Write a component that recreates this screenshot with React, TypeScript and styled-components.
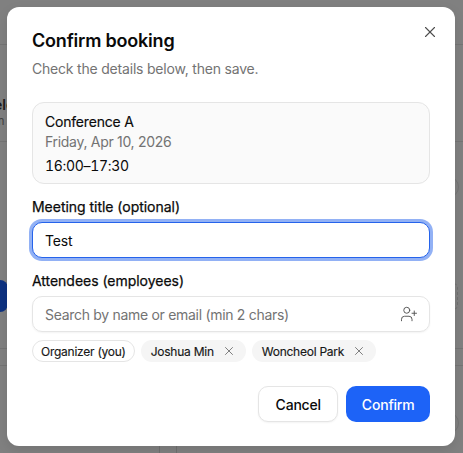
import React from "react";
import styled, { createGlobalStyle } from "styled-components";
import { X, UserPlus } from "lucide-react";

const Global = createGlobalStyle`
  html, body { margin: 0; padding: 0; height: 100%; }
  body { font-family: Inter, "Liberation Sans", sans-serif; background: #808080; overflow: hidden; }
  #root { height: 100%; }
`;

const Overlay = styled.div`
  position: relative;
  box-sizing: border-box;
  width: 463px;
  height: 453px;
  padding-right: 1px;
  background: #808080;
  overflow: hidden;
  display: flex;
  align-items: center;
  justify-content: center;
`;

const BackdropLine = styled.div<{ $top: number }>`
  position: absolute;
  left: 0;
  right: 0;
  top: ${(p) => p.$top}px;
  height: 1px;
  background: #747474;
`;

const BackdropColumnLine = styled.div<{ $left: number }>`
  position: absolute;
  left: ${(p) => p.$left}px;
  top: 365px;
  bottom: 0;
  width: 1px;
  background: #707070;
`;

const BackdropRing = styled.div<{ $top: number }>`
  position: absolute;
  right: 4px;
  top: ${(p) => p.$top}px;
  width: 22px;
  height: 22px;
  box-sizing: border-box;
  border-radius: 50%;
  border: 1px solid #747474;
`;

const BackdropSlot = styled.div`
  position: absolute;
  right: 5px;
  top: 283px;
  width: 24px;
  height: 27px;
  box-sizing: border-box;
  border-radius: 5px;
  border: 1px dashed #707070;
`;

const BackdropBlob = styled.div`
  position: absolute;
  left: -20px;
  top: 280px;
  width: 28px;
  height: 32px;
  border-radius: 8px;
  background: #0d3180;
`;

const BackdropText = styled.div<{ $top: number; $strong?: boolean }>`
  position: absolute;
  left: -6px;
  top: ${(p) => p.$top}px;
  font-size: ${(p) => (p.$strong ? 14 : 12)}px;
  font-weight: ${(p) => (p.$strong ? 600 : 400)};
  color: ${(p) => (p.$strong ? "#1a1a1a" : "#444")};
  line-height: 16px;
`;

const Dialog = styled.div`
  position: relative;
  z-index: 1;
  box-sizing: border-box;
  width: 448px;
  height: 439px;
  padding: 22px 25px 24px;
  background: #fff;
  border-radius: 12px;
  box-shadow: 0 4px 12px rgba(0, 0, 0, 0.1);
  display: flex;
  flex-direction: column;
`;

const CloseButton = styled.button`
  position: absolute;
  top: 16px;
  right: 16px;
  width: 18px;
  height: 18px;
  padding: 0;
  border: 0;
  background: none;
  color: #4d4d4d;
  display: flex;
  align-items: center;
  justify-content: center;
`;

const Title = styled.h2`
  margin: 0;
  font-size: 18px;
  line-height: 24px;
  font-weight: 600;
  letter-spacing: -0.2px;
  color: #0a0a0a;
`;

const Description = styled.p`
  margin: 6px 0 0;
  font-size: 14px;
  line-height: 20px;
  letter-spacing: -0.2px;
  color: #737373;
`;

const SummaryCard = styled.div`
  box-sizing: border-box;
  margin-top: 23px;
  height: 82px;
  padding: 9px 12px 8px;
  border: 1px solid #e5e5e5;
  border-radius: 12px;
  background: #fafafa;
`;

const CardName = styled.div`
  font-size: 14px;
  line-height: 20px;
  letter-spacing: -0.2px;
  -webkit-text-stroke: 0.15px #0a0a0a;
  color: #0a0a0a;
`;

const CardDate = styled.div`
  font-size: 14px;
  line-height: 20px;
  letter-spacing: -0.3px;
  color: #737373;
`;

const CardTime = styled.div`
  margin-top: 4px;
  font-size: 14px;
  line-height: 20px;
  font-variant-numeric: tabular-nums;
  letter-spacing: -0.3px;
  color: #0a0a0a;
`;

const Label = styled.label`
  display: block;
  margin-top: 13px;
  font-size: 14px;
  line-height: 20px;
  font-weight: 400;
  letter-spacing: -0.03px;
  -webkit-text-stroke: 0.25px #0a0a0a;
  color: #0a0a0a;
`;

const TitleInput = styled.div`
  box-sizing: border-box;
  margin-top: 5px;
  height: 36px;
  padding: 0 12px;
  display: flex;
  align-items: center;
  font-size: 14px;
  letter-spacing: -0.2px;
  color: #0a0a0a;
  background: #fff;
  border: 1px solid #2563eb;
  border-radius: 10px;
  box-shadow: 0 0 0 3px rgba(37, 99, 235, 0.5);
`;

const SearchField = styled.div`
  box-sizing: border-box;
  margin-top: 5px;
  height: 36px;
  padding: 0 11px 0 12px;
  display: flex;
  align-items: center;
  justify-content: space-between;
  border: 1px solid #e5e5e5;
  border-radius: 10px;
  box-shadow: 0 1px 2px rgba(0, 0, 0, 0.05);
  color: #737373;
  font-size: 14px;
  letter-spacing: -0.3px;
`;

const ChipRow = styled.div`
  display: flex;
  gap: 6px;
  margin-top: 8px;
`;

const Chip = styled.span<{ $outline?: boolean }>`
  box-sizing: border-box;
  height: 22px;
  display: inline-flex;
  align-items: center;
  gap: 8px;
  padding: 0 ${(p) => (p.$outline ? 8 : 10)}px;
  border-radius: 11px;
  font-size: 12px;
  font-weight: 400;
  letter-spacing: -0.25px;
  -webkit-text-stroke: 0.15px #171717;
  color: #171717;
  background: ${(p) => (p.$outline ? "#fff" : "#f5f5f5")};
  border: ${(p) => (p.$outline ? "1px solid #e5e5e5" : "0")};
  svg { color: #525252; -webkit-text-stroke: 0; }
`;

const Footer = styled.div`
  margin-top: auto;
  display: flex;
  justify-content: flex-end;
  gap: 8px;
`;

const Button = styled.button<{ $primary?: boolean }>`
  box-sizing: border-box;
  height: 36px;
  padding: 0 ${(p) => (p.$primary ? 15.5 : 16.5)}px;
  border-radius: 10px;
  font-family: inherit;
  font-size: 14px;
  font-weight: 500;
  letter-spacing: -0.2px;
  color: ${(p) => (p.$primary ? "#fff" : "#0a0a0a")};
  background: ${(p) => (p.$primary ? "#1d63f7" : "#fff")};
  border: ${(p) => (p.$primary ? "0" : "1px solid #e5e5e5")};
  box-shadow: ${(p) => (p.$primary ? "none" : "0 1px 2px rgba(0,0,0,0.05)")};
`;

export default function App() {
  return (
    <Overlay>
      <Global />
      <BackdropLine $top={44} />
      <BackdropLine $top={141} />
      <BackdropLine $top={348} />
      <BackdropLine $top={365} />
      <BackdropColumnLine $left={159} />
      <BackdropColumnLine $left={176} />
      <BackdropRing $top={176} />
      <BackdropSlot />
      <BackdropRing $top={412} />
      <BackdropBlob />
      <BackdropText $top={97} $strong>ele</BackdropText>
      <BackdropText $top={113}>m</BackdropText>
      <Dialog>
        <CloseButton aria-label="Close"><X size={18} strokeWidth={1.5} /></CloseButton>
        <Title>Confirm booking</Title>
        <Description>Check the details below, then save.</Description>
        <SummaryCard>
          <CardName>Conference A</CardName>
          <CardDate>Friday, Apr 10, 2026</CardDate>
          <CardTime>16:00–17:30</CardTime>
        </SummaryCard>
        <Label>Meeting title (optional)</Label>
        <TitleInput>Test</TitleInput>
        <Label>Attendees (employees)</Label>
        <SearchField>
          Search by name or email (min 2 chars)
          <UserPlus size={18} strokeWidth={1.25} color="#525252" />
        </SearchField>
        <ChipRow>
          <Chip $outline>Organizer (you)</Chip>
          <Chip>Joshua Min <X size={14} strokeWidth={1.25} /></Chip>
          <Chip>Woncheol Park <X size={14} strokeWidth={1.25} /></Chip>
        </ChipRow>
        <Footer>
          <Button>Cancel</Button>
          <Button $primary>Confirm</Button>
        </Footer>
      </Dialog>
    </Overlay>
  );
}
